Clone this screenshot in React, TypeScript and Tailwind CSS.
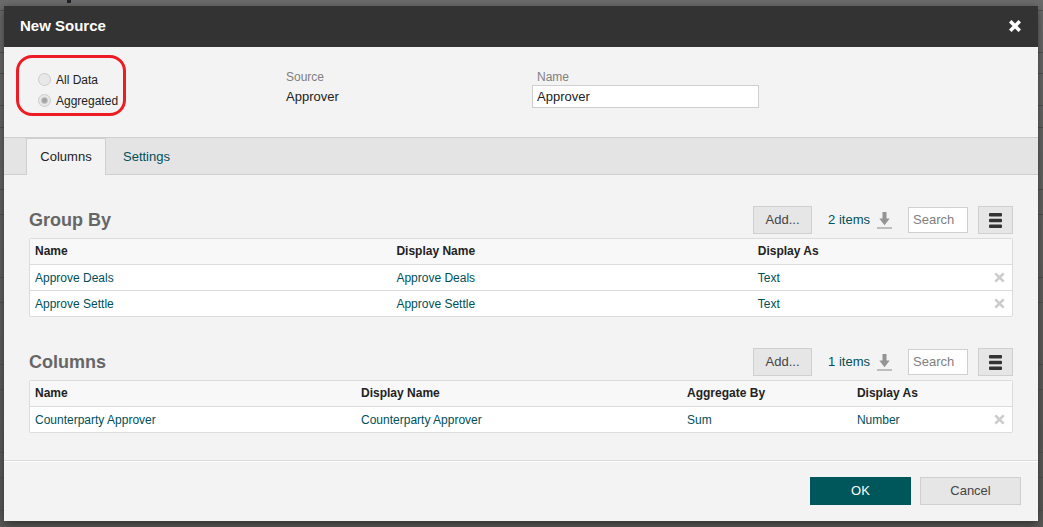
import { useState } from 'react';

type Column = { title: string; width: string };

const groupColumns: Column[] = [
  { title: 'Name', width: 'w-[36.8%]' },
  { title: 'Display Name', width: 'w-[36.8%]' },
  { title: 'Display As', width: '' },
];

const valueColumns: Column[] = [
  { title: 'Name', width: 'w-[33.2%]' },
  { title: 'Display Name', width: 'w-[33.2%]' },
  { title: 'Aggregate By', width: 'w-[17.3%]' },
  { title: 'Display As', width: '' },
];

const backdropRows = [
  'h-[42px]', 'h-[21px]', 'h-[32px]', 'h-[22px]', 'h-[62px]', 'h-[25px]', 'h-[63px]',
  'h-[25px]', 'h-[62px]', 'h-[25px]', 'h-[63px]', 'h-[25px]', 'h-[33px]',
];

function CrossIcon() {
  return (
    <svg viewBox="0 0 12 12" className="size-3" aria-hidden="true">
      <path d="M2.500 2.500 9.500 9.500M9.500 2.500 2.500 9.500" stroke="currentColor" strokeWidth="3.600" strokeLinecap="square" fill="none" />
    </svg>
  );
}

function SmallCrossIcon() {
  return (
    <svg viewBox="0 0 11 11" className="size-[11px]" aria-hidden="true">
      <path d="M1.300 1.300 9.700 9.700M9.700 1.300 1.300 9.700" stroke="currentColor" strokeWidth="2.600" fill="none" />
    </svg>
  );
}

function DownloadIcon() {
  return (
    <svg viewBox="0 0 15 17" className="h-[17px] w-[15px]" aria-hidden="true">
      <path d="M5.500 0h4v6.500h3.200L7.500 13.200 2.300 6.500h3.200z" fill="#949494" />
      <path d="M0 15h15v2H0z" fill="#bdbdbd" />
    </svg>
  );
}

function MenuIcon() {
  return (
    <svg viewBox="0 0 13 15" className="h-[15px] w-[13px]" fill="#333" aria-hidden="true">
      <rect y="0" width="13" height="3.400" rx="1" />
      <rect y="5.800" width="13" height="3.400" rx="1" />
      <rect y="11.600" width="13" height="3.400" rx="1" />
    </svg>
  );
}

function ListSection({ title, columns, rows }: { title: string; columns: Column[]; rows: string[][] }) {
  return (
    <section>
      <div className="mb-1 flex h-7 items-center">
        <h2 className="flex-1 text-[18px] font-bold text-[#666]">{title}</h2>
        <button type="button" className="h-7 w-[59px] border border-[#cfcfcf] bg-[#e6e6e6] text-[#444]">Add...</button>
        <button type="button" className="ml-4 flex items-center gap-[7px] text-[#00505a]">
          {rows.length} items
          <DownloadIcon />
        </button>
        <input
          type="text"
          aria-label={`Search ${title}`}
          placeholder="Search"
          className="ml-4 h-[26px] w-[60px] border border-[#cfcfcf] bg-white px-1 pb-0.5 placeholder:text-[#808080]"
        />
        <button type="button" aria-label="Menu" className="ml-[10px] flex h-7 w-[35px] items-center justify-center border border-[#cfcfcf] bg-[#e6e6e6]">
          <MenuIcon />
        </button>
      </div>
      <div className="rounded-[2px] border border-[#dcdcdc] bg-white">
        <table className="w-full table-fixed border-separate border-spacing-0 text-left text-xs">
          <thead>
            <tr className="bg-[#f8f8f8] text-[#222]">
              {columns.map((c) => (
                <th key={c.title} scope="col" className={`${c.width} h-[26px] border-b border-[#dcdcdc] px-[5px] py-0 pb-px font-bold`}>{c.title}</th>
              ))}
              <td className="w-[26px] border-b border-[#dcdcdc]" />
            </tr>
          </thead>
          <tbody>
            {rows.map((row) => (
              <tr key={row[0]} className="group text-[#00505a]">
                {row.map((cell, i) => (
                  <td key={i} className="h-[26px] border-b border-[#dcdcdc] px-[5px] py-0 group-last:h-[25px] group-last:border-b-0">{cell}</td>
                ))}
                <td className="border-b border-[#dcdcdc] py-0 pl-2 group-last:border-b-0">
                  <button type="button" aria-label={`Remove ${row[0]}`} className="block text-[#ccc]">
                    <SmallCrossIcon />
                  </button>
                </td>
              </tr>
            ))}
          </tbody>
        </table>
      </div>
    </section>
  );
}

function ModeRadio({ label, checked, onSelect }: { label: string; checked: boolean; onSelect: () => void }) {
  return (
    <label className="flex h-[21px] items-center gap-[5px] text-xs text-[#222]">
      <input
        type="radio"
        name="mode"
        checked={checked}
        onChange={onSelect}
        className="size-[13px] appearance-none rounded-full border border-[#ccc] bg-[#e8e8e8] checked:bg-[radial-gradient(circle,#a4a4a4_2px,#e8e8e8_4px)]"
      />
      {label}
    </label>
  );
}

export default function App() {
  const [mode, setMode] = useState('Aggregated');
  const [name, setName] = useState('Approver');

  return (
    <div className="relative isolate flex min-h-screen flex-col overflow-hidden bg-[#606060] pt-1.5 pr-[5px] pb-1.5 pl-1 font-['Liberation_Sans',Arial,sans-serif] text-[13px]">
      <div className="absolute inset-0 -z-10 bg-linear-to-b from-[#6c6c6c] to-[#5c5a58]" aria-hidden="true">
        <div className="flex h-[11px] border-b border-[#545454] pl-[67px]">
          <span className="h-[3px] w-[4px] bg-[#202028]" />
        </div>
        {backdropRows.map((height, i) => (
          <div key={i} className={`${height} border-b border-[#535353]`} />
        ))}
      </div>
      <main role="dialog" aria-labelledby="dialog-title" className="flex flex-1 flex-col bg-[#f3f3f3] shadow-[0_3px_10px_rgba(0,0,0,0.5)]">
        <header className="flex h-[41px] items-center justify-between bg-[#333] pr-[17px] pb-0.5 pl-4 text-white">
          <h1 id="dialog-title" className="pt-0.5 text-[15px] font-bold">New Source</h1>
          <button type="button" aria-label="Close">
            <CrossIcon />
          </button>
        </header>

        <div className="grid grid-cols-[270px_241px_1fr] pt-2 pb-[21px] pl-3">
          <fieldset aria-label="Mode" className="h-[61px] w-[110px] rounded-2xl border-3 border-[#ed1c24] pt-[11px] pl-[19px]">
            {['All Data', 'Aggregated'].map((option) => (
              <ModeRadio key={option} label={option} checked={mode === option} onSelect={() => setMode(option)} />
            ))}
          </fieldset>
          <dl className="pt-3.5">
            <dt className="text-xs leading-4 text-[#808080]">Source</dt>
            <dd className="leading-6 text-[#222]">Approver</dd>
          </dl>
          <div className="pt-3.5 pl-[5px]">
            <label htmlFor="source-name" className="block pl-[5px] text-xs leading-4 text-[#808080]">Name</label>
            <input
              id="source-name"
              value={name}
              onChange={(e) => setName(e.target.value)}
              className="block h-[23px] w-[227px] border border-[#cfcfcf] bg-white px-1 text-[#222]"
            />
          </div>
        </div>

        <div role="tablist" className="flex h-[38px] border-y border-[#cfcfcf] bg-[#e4e4e4] pl-[22px]">
          <button type="button" role="tab" aria-selected="true" className="-mb-px w-20 border border-b-0 border-[#cfcfcf] bg-[#f3f3f3] text-[#222]">Columns</button>
          <button type="button" role="tab" aria-selected="false" className="-mb-px border-t border-transparent px-[17px] text-[#00505a]">Settings</button>
        </div>

        <div className="flex flex-1 flex-col gap-[31px] pt-[31px] pr-[25px] pb-[27px] pl-[25px]">
          <ListSection
            title="Group By"
            columns={groupColumns}
            rows={[
              ['Approve Deals', 'Approve Deals', 'Text'],
              ['Approve Settle', 'Approve Settle', 'Text'],
            ]}
          />
          <ListSection
            title="Columns"
            columns={valueColumns}
            rows={[['Counterparty Approver', 'Counterparty Approver', 'Sum', 'Number']]}
          />
        </div>

        <footer className="border-t border-[#dadada]">
          <div className="flex justify-end gap-[9px] border-t border-white pt-[15px] pr-[17px] pb-4">
            <button type="button" className="h-7 w-[101px] bg-[#00575b] text-white">OK</button>
            <button type="button" className="h-7 w-[101px] border border-[#cfcfcf] bg-[#e6e6e6] text-[#444]">Cancel</button>
          </div>
        </footer>
      </main>
    </div>
  );
}
